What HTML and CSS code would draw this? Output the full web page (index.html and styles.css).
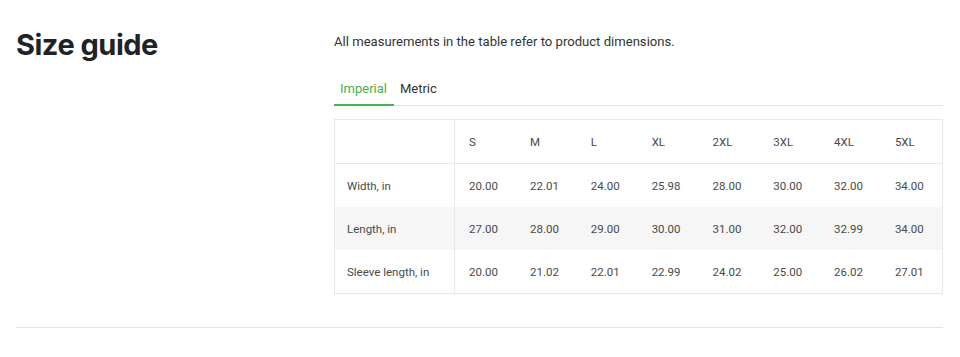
FILE: index.html
```html
<!DOCTYPE html>
<html lang="en">
<head>
    <meta charset="UTF-8">
    <meta name="viewport" content="width=device-width, initial-scale=1.0">
    <title>Size guide</title>
    <link rel="stylesheet" href="styles.css">
</head>
<body>
    <section class="size-guide">
        <h2 class="title">Size guide</h2>
        <div class="content">
            <p class="note">All measurements in the table refer to product dimensions.</p>
            <div class="tabs">
                <button class="tab active">Imperial</button>
                <button class="tab">Metric</button>
            </div>
            <table class="sizes">
                <thead>
                    <tr>
                        <th></th>
                        <th>S</th><th>M</th><th>L</th><th>XL</th><th>2XL</th><th>3XL</th><th>4XL</th><th>5XL</th>
                    </tr>
                </thead>
                <tbody>
                    <tr>
                        <td>Width, in</td>
                        <td>20.00</td><td>22.01</td><td>24.00</td><td>25.98</td><td>28.00</td><td>30.00</td><td>32.00</td><td>34.00</td>
                    </tr>
                    <tr>
                        <td>Length, in</td>
                        <td>27.00</td><td>28.00</td><td>29.00</td><td>30.00</td><td>31.00</td><td>32.00</td><td>32.99</td><td>34.00</td>
                    </tr>
                    <tr>
                        <td>Sleeve length, in</td>
                        <td>20.00</td><td>21.02</td><td>22.01</td><td>22.99</td><td>24.02</td><td>25.00</td><td>26.02</td><td>27.01</td>
                    </tr>
                </tbody>
            </table>
        </div>
    </section>
</body>
</html>
```

FILE: styles.css
```css
body {
    margin: 0;
    padding: 0 16px;
    font-family: Roboto, 'Liberation Sans', sans-serif;
    color: #333;
    background: #fff;
}
.size-guide {
    display: flex;
    padding-top: 25px;
    padding-bottom: 33px;
    border-bottom: 1px solid #e4e4e4;
    width: 927px;
}
.title {
    width: 318px;
    margin: 0;
    font-family: Inter, sans-serif;
    font-size: 29px;
    font-weight: 700;
    letter-spacing: -0.5px;
    color: #1d2327;
    line-height: 40px;
}
.content {
    flex: 1;
}
.note {
    margin: 9px 0 0;
    font-size: 13.1px;
    line-height: 16px;
    color: #333;
}
.tabs {
    display: flex;
    margin-top: 26px;
    border-bottom: 1px solid #e6e6e6;
}
.tab {
    background: none;
    border: none;
    font-family: inherit;
    font-size: 13px;
    color: #333;
    padding: 5px 7px 8px 6px;
    margin-bottom: -1px;
    border-bottom: 2px solid transparent;
    cursor: pointer;
}
.tab.active {
    color: #4caf50;
    border-bottom-color: #4caf50;
}
.sizes {
    margin-top: 13px;
    width: 100%;
    border-collapse: collapse;
    border: 1px solid #e8e8e8;
    font-size: 11.5px;
    color: #4a4a4a;
}
.sizes th, .sizes td {
    text-align: left;
    font-weight: 400;
    padding: 0 0 0 14px;
    height: 43px;
}
.sizes th:first-child, .sizes td:first-child {
    width: 107px;
    padding-left: 12px;
    border-right: 1px solid #e8e8e8;
}
.sizes thead th {
    height: 43px;
    border-bottom: 1px solid #e8e8e8;
}
.sizes tbody tr:nth-child(2) {
    background: #f6f6f6;
}
```
